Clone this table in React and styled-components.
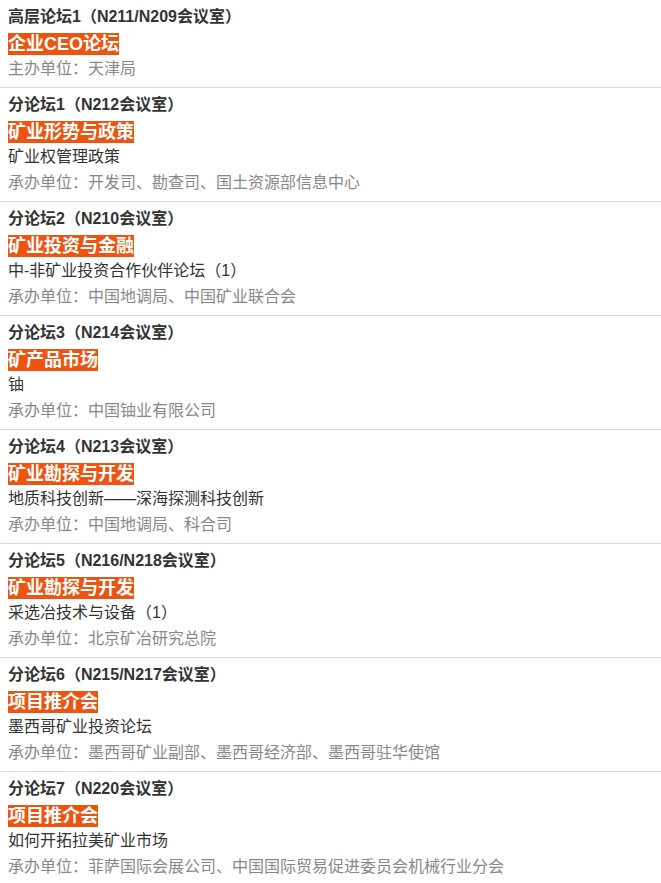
import React from 'react'
import styled, { createGlobalStyle } from 'styled-components'

const GlobalStyle = createGlobalStyle`
  body {
    margin: 0;
    background: #fff;
    font-family: "Liberation Sans", "Noto Sans CJK SC", sans-serif;
  }
`;

const List = styled.ul`
  list-style: none;
  margin: 0;
  padding: 0;
  width: 661px;
`;

const Item = styled.li`
  padding: 4px 8px 5px;
  border-bottom: 1px solid #dcdcdc;
`;

const Line = styled.div`
  height: 26px;
  line-height: 26px;
  white-space: nowrap;
  font-size: 16px;
  color: ${p => p.muted ? '#888' : '#333'};
`;

const Title = styled(Line)`
  font-weight: bold;
  color: #333;
`;

const Tag = styled.span`
  display: inline-block;
  vertical-align: middle;
  height: 22px;
  line-height: 22px;
  font-size: 18px;
  font-weight: bold;
  color: #fff;
  background: #ee5410;
`;

const forums = [
  { title: '高层论坛1（N211/N209会议室）', tag: '企业CEO论坛', org: '主办单位：天津局' },
  { title: '分论坛1（N212会议室）', tag: '矿业形势与政策', desc: '矿业权管理政策', org: '承办单位：开发司、勘查司、国土资源部信息中心' },
  { title: '分论坛2（N210会议室）', tag: '矿业投资与金融', desc: '中-非矿业投资合作伙伴论坛（1）', org: '承办单位：中国地调局、中国矿业联合会' },
  { title: '分论坛3（N214会议室）', tag: '矿产品市场', desc: '铀', org: '承办单位：中国铀业有限公司' },
  { title: '分论坛4（N213会议室）', tag: '矿业勘探与开发', desc: '地质科技创新——深海探测科技创新', org: '承办单位：中国地调局、科合司' },
  { title: '分论坛5（N216/N218会议室）', tag: '矿业勘探与开发', desc: '采选冶技术与设备（1）', org: '承办单位：北京矿冶研究总院' },
  { title: '分论坛6（N215/N217会议室）', tag: '项目推介会', desc: '墨西哥矿业投资论坛', org: '承办单位：墨西哥矿业副部、墨西哥经济部、墨西哥驻华使馆' },
  { title: '分论坛7（N220会议室）', tag: '项目推介会', desc: '如何开拓拉美矿业市场', org: '承办单位：菲萨国际会展公司、中国国际贸易促进委员会机械行业分会' },
];

export default function App() {
  return (
    <>
      <GlobalStyle />
      <List>
        {forums.map((f, i) => (
          <Item key={i}>
            <Title>{f.title}</Title>
            <Line><Tag>{f.tag}</Tag></Line>
            {f.desc && <Line>{f.desc}</Line>}
            <Line muted>{f.org}</Line>
          </Item>
        ))}
      </List>
    </>
  )
}
